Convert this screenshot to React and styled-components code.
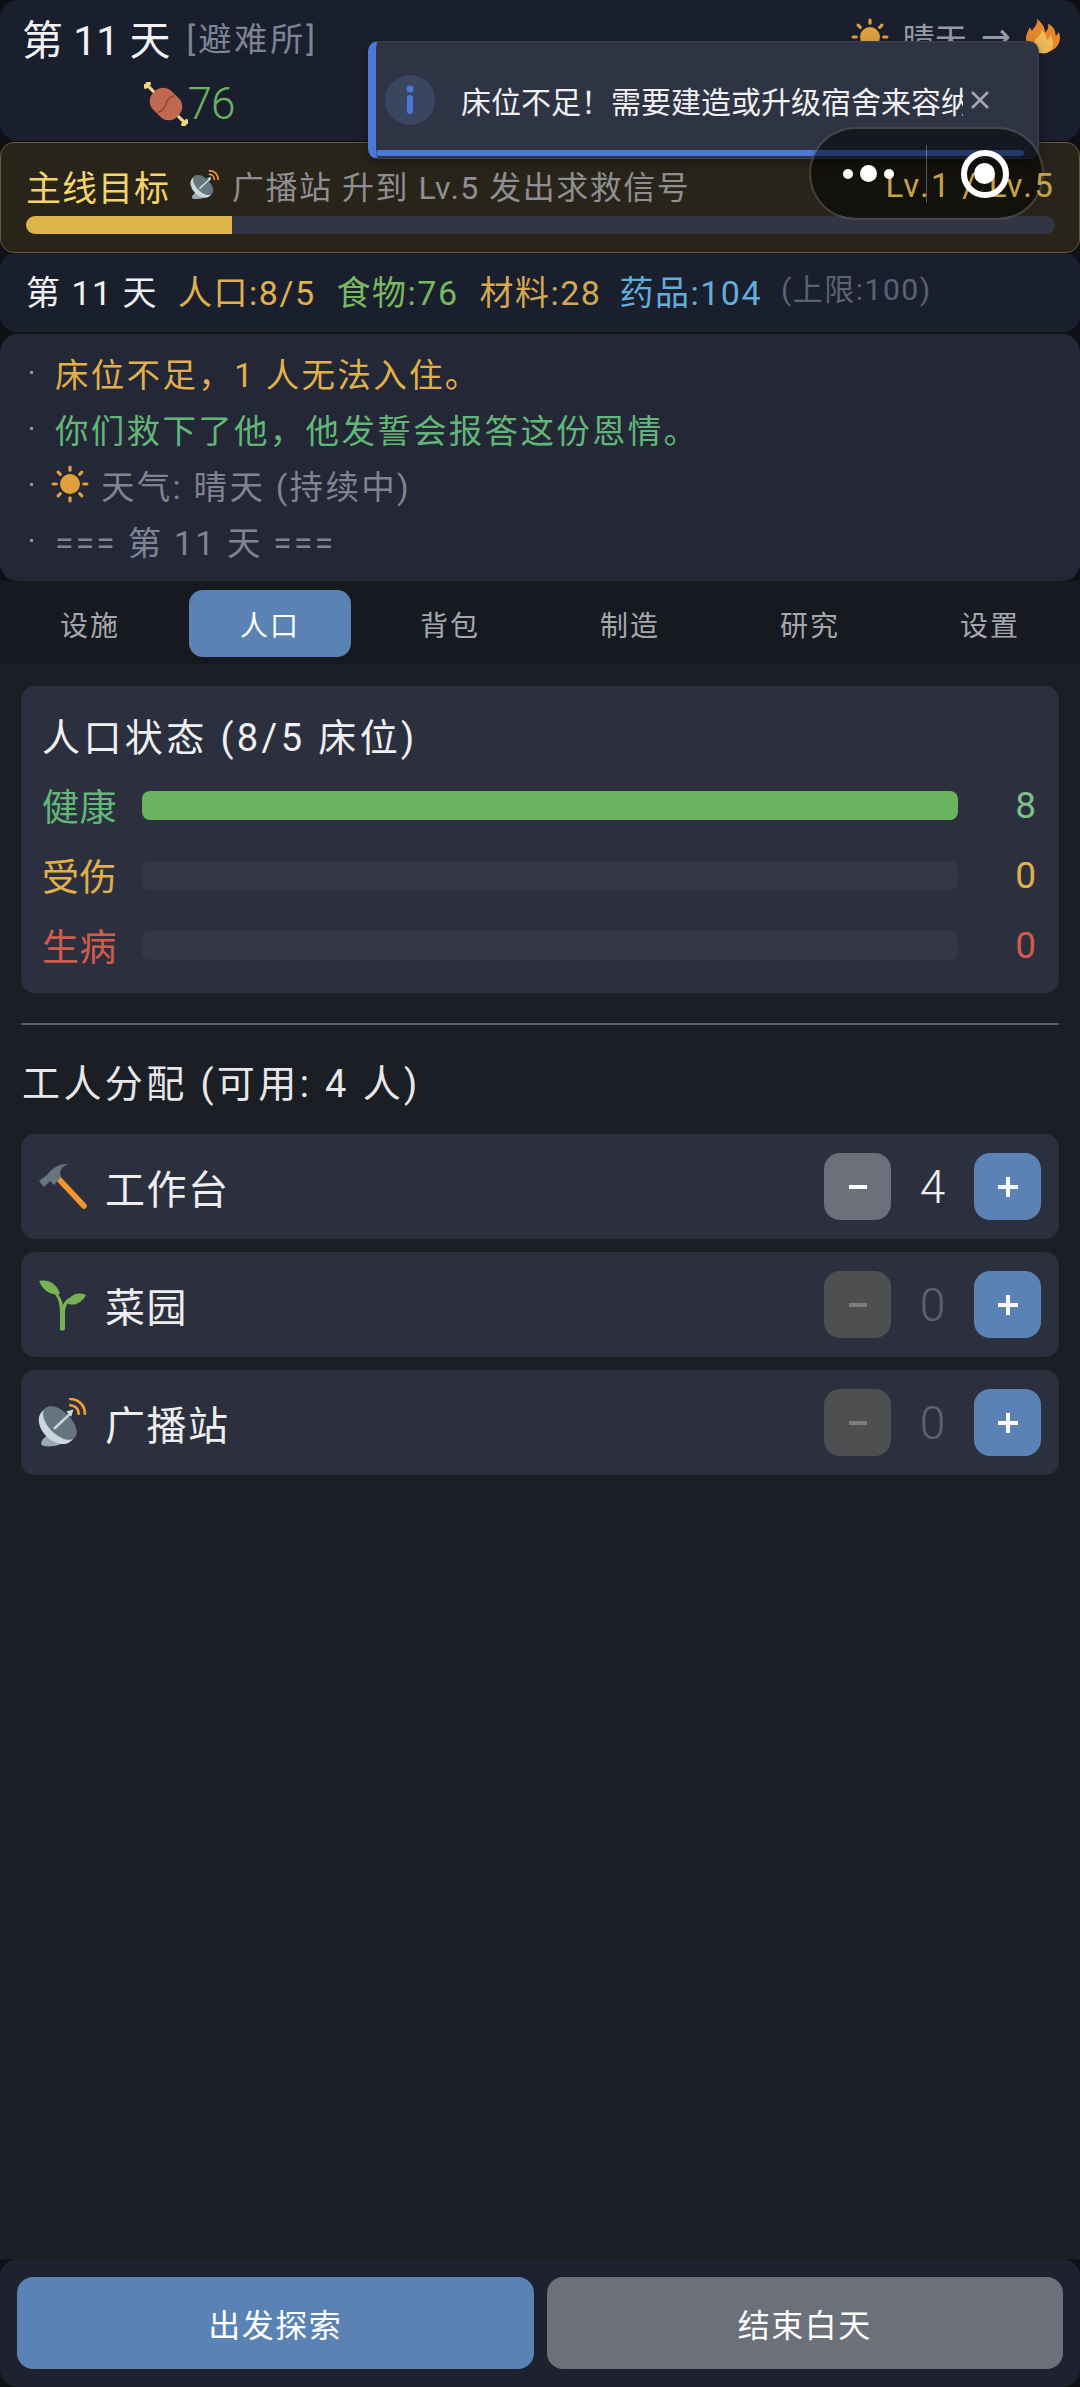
import React from 'react';
import styled, { createGlobalStyle } from 'styled-components';

const GlobalStyle = createGlobalStyle`
  html, body { margin: 0; padding: 0; background: #0f1014; }
  * { box-sizing: border-box; }
  body { font-family: Roboto, "Noto Sans CJK SC", sans-serif; color: #e8e8ea; }
`;

const colors = {
  blue: '#5a82b4',
  green: '#6ab35f',
  logGreen: '#62b677',
  amber: '#e0b04c',
  red: '#cf5c4c',
  sky: '#62aedb',
  muted: '#7f8494',
};

const Page = styled.div`
  position: relative;
  width: 1080px;
  height: 2387px;
  overflow: hidden;
  display: flex;
  flex-direction: column;
  background: #0f1014;
`;

const Header = styled.header`
  height: 141px;
  margin-bottom: 1px;
  padding: 10px 19px 0 22px;
  background: #1a1f2e;
  border-radius: 18px;
`;

const HeaderTop = styled.div`
  display: flex;
  align-items: center;
  justify-content: space-between;
  height: 54px;
`;

const TitleGroup = styled.div`
  display: flex;
  align-items: center;
  gap: 16px;
`;

const DayTitle = styled.h1`
  margin: 0;
  font-size: 41px;
  font-weight: 400;
  color: #f2f2f4;
`;

const Place = styled.span`
  font-size: 33px;
  letter-spacing: 3px;
  color: #7f8494;
`;

const Weather = styled.div`
  display: flex;
  align-items: center;
  gap: 14px;
  font-size: 32px;
  color: #9a9ca6;
`;

const Arrow = styled.span`
  font-family: "DejaVu Sans", sans-serif;
  font-size: 36px;
  line-height: 1;
`;

const FoodWrap = styled.div`
  display: flex;
  justify-content: center;
  align-items: center;
  width: 334px;
  height: 50px;
  margin-top: 15px;
  font-size: 44px;
  font-weight: 300;
  letter-spacing: -1px;
  color: ${colors.green};
`;

const Goal = styled.section`
  height: 111px;
  padding: 19px 24px 0 25px;
  background: #29241a;
  border: 1px solid #6a5a35;
  border-radius: 14px;
`;

const GoalTop = styled.div`
  display: flex;
  align-items: center;
  height: 46px;
`;

const GoalTitle = styled.span`
  font-size: 35px;
  letter-spacing: 1px;
  color: #f3d46c;
  margin-right: 20px;
`;

const GoalText = styled.span`
  flex: 1;
  margin-left: 12px;
  font-size: 32px;
  letter-spacing: 1.500px;
  color: #8e8f92;
`;

/* reads through the wechat capsule in the reference */
const GoalLevel = styled.span`
  position: relative;
  z-index: 2;
  font-size: 33px;
  letter-spacing: 2.300px;
  color: #c4a347;
`;

const Track = styled.div`
  height: ${p => p.$h}px;
  margin-top: ${p => p.$mt || 0}px;
  flex: ${p => p.$flex || 'none'};
  background: ${p => p.$bg};
  border-radius: ${p => p.$r}px;
  overflow: hidden;
`;

const Fill = styled.div`
  height: 100%;
  background: ${p => p.$bg};
`;

const Stats = styled.section`
  height: 79px;
  display: flex;
  align-items: center;
  padding: 0 0 4px 26px;
  background: #1a1f2e;
  border-radius: 16px;
  font-size: 34px;
  letter-spacing: 1.500px;
`;

const Stat = styled.span`
  color: ${p => p.$color};
  margin-right: ${p => p.$gap}px;
  ${p => p.$small && 'font-size: 30px; transform: translateY(-4px);'}
`;

const Log = styled.section`
  height: 247px;
  margin-top: 2px;
  padding: 10px 0 0 30px;
  background: #232736;
  border-radius: 18px;
`;

const LogLine = styled.div`
  display: flex;
  align-items: center;
  height: 56px;
  font-size: 33.5px;
  letter-spacing: 2.300px;
  color: ${p => p.$color};
  &::before {
    content: '';
    width: 3px;
    height: 3px;
    margin-right: 22px;
    background: #8e93a3;
  }
`;

const LogIcon = styled.span`
  display: flex;
  margin: 0 12px 0 -4px;
`;

const Tabs = styled.nav`
  display: grid;
  grid-template-columns: repeat(6, 1fr);
  height: 83px;
  padding: 9px 0 7px;
  background: #171920;
`;

const Tab = styled.div`
  display: flex;
  align-items: center;
  justify-content: center;
  margin: 0 9px;
  font-size: 28px;
  letter-spacing: 2px;
  border-radius: 14px;
  color: ${p => (p.$active ? '#fff' : '#a6a7ac')};
  background: ${p => (p.$active ? colors.blue : 'transparent')};
`;

const Content = styled.main`
  flex: 1;
  padding: 22px 21px 0 21px;
  background: #1c1e26;
`;

const Panel = styled.section`
  height: 307px;
  padding: 27px 23px 0 21px;
  background: #2c303e;
  border-radius: 14px;
`;

const PanelTitle = styled.h2`
  margin: 0 0 7px;
  height: 50px;
  line-height: 50px;
  font-size: 38px;
  font-weight: 400;
  letter-spacing: 3.400px;
  color: #f0f0f2;
`;

const HealthRow = styled.div`
  display: flex;
  align-items: center;
  height: 70px;
  font-size: 37px;
  color: ${p => p.$color};
`;

const HealthLabel = styled.span`
  width: 100px;
  letter-spacing: 0.500px;
`;

const HealthValue = styled.span`
  width: 78px;
  text-align: right;
`;

const Divider = styled.hr`
  height: 2px;
  margin: 30px 0 0;
  border: 0;
  background: #5a5d68;
`;

const WorkersTitle = styled.h2`
  margin: 34px 0 25px 1px;
  height: 50px;
  line-height: 50px;
  font-size: 38px;
  font-weight: 400;
  letter-spacing: 3.400px;
  color: #e8e8ea;
`;

const WorkerList = styled.div`
  display: flex;
  flex-direction: column;
  gap: 13px;
`;

const WorkerRow = styled.div`
  display: flex;
  align-items: center;
  height: 105px;
  padding: 0 18px 0 17px;
  background: #2c303e;
  border-radius: 14px;
`;

const WorkerName = styled.span`
  flex: 1;
  margin-left: 17px;
  font-size: 40px;
  letter-spacing: 1.500px;
  color: #eeeef0;
`;

const StepButton = styled.button`
  width: 67px;
  height: 67px;
  padding: 0;
  border: 0;
  border-radius: 16px;
  display: flex;
  align-items: center;
  justify-content: center;
  background: ${p => p.$bg};
  color: ${p => p.$fg};
`;

const Count = styled.span`
  width: 83px;
  text-align: center;
  font-size: 46px;
  font-weight: 300;
  color: ${p => (p.$dim ? '#5d6170' : '#f0f0f2')};
`;

const Footer = styled.footer`
  height: 128px;
  display: flex;
  gap: 13px;
  padding: 18px 17px 18px;
  background: #1e2230;
  border-radius: 18px;
`;

const FooterButton = styled.button`
  flex: 1;
  border: 0;
  border-radius: 16px;
  font-family: inherit;
  font-size: 32px;
  letter-spacing: 1.500px;
  color: #fff;
  background: ${p => p.$bg};
`;

/* toast and wechat capsule sit over the header */
const Toast = styled.div`
  position: absolute;
  left: 368px;
  top: 41px;
  width: 671px;
  height: 118px;
  display: flex;
  align-items: center;
  padding: 0 0 0 9px;
  background: #2f3444;
  border: 1px solid #3c4152;
  border-left: 8px solid #4a77d8;
  border-radius: 10px;
  box-shadow: 0 4px 12px rgba(0, 0, 0, 0.35);
  overflow: hidden;
  &::after {
    content: '';
    position: absolute;
    left: 0;
    bottom: 2px;
    width: 648px;
    height: 6px;
    border-radius: 3px;
    background: #4a77d8;
  }
`;

const ToastIcon = styled.span`
  flex: none;
  display: flex;
  align-items: center;
  justify-content: center;
  width: 50px;
  height: 50px;
  border-radius: 50%;
  background: #3a4560;
`;

const ToastText = styled.span`
  width: 502px;
  margin-left: 26px;
  overflow: hidden;
  white-space: nowrap;
  font-size: 30px;
  color: #f0f0f2;
`;

const ToastClose = styled.span`
  display: flex;
  margin-left: 7px;
  color: #a5a9b4;
`;

const Capsule = styled.div`
  position: absolute;
  left: 809px;
  top: 127px;
  width: 235px;
  height: 93px;
  display: flex;
  align-items: center;
  background: rgba(0, 0, 0, 0.52);
  border: 2px solid rgba(255, 255, 255, 0.2);
  border-radius: 47px;
`;

const CapsuleSide = styled.div`
  position: relative;
  z-index: 3;
  flex: 1;
  height: 58px;
  display: flex;
  align-items: center;
  justify-content: center;
  gap: ${p => p.$gap || 0}px;
  ${p => p.$line && 'border-right: 1px solid rgba(255,255,255,0.3);'}
`;

const Dot = styled.i`
  width: ${p => p.$d}px;
  height: ${p => p.$d}px;
  border-radius: 50%;
  background: #fff;
`;

const Ring = styled.div`
  width: 48px;
  height: 48px;
  display: flex;
  align-items: center;
  justify-content: center;
  border: 6px solid #fff;
  border-radius: 50%;
`;

const Sun = ({ size }) => (
  <svg width={size} height={size} viewBox="0 0 36 36">
    <circle cx="18" cy="18" r="9.5" fill="#e0a040" />
    <g stroke="#e0a040" strokeWidth="3" strokeLinecap="round">
      <path d="M18 2v3M18 31v3M2 18h3M31 18h3M6.7 6.7l2.1 2.1M27.2 27.2l2.1 2.1M6.7 29.3l2.1-2.1M27.2 8.8l2.1-2.1" />
    </g>
  </svg>
);

const Fire = () => (
  <svg width="36" height="36" viewBox="0 0 36 36">
    <path fill="#e5872a" d="M35 19c0-2-.6-4.5-1.5-6-.5 2-1.700 3.500-3 3.500C31 11 27 6 23 5c1 4-1 7-3 8.500 0-5-3-10-8-13.500 1 6-3 8-5 12-.5-1.500-1.500-2.500-3-3.500.5 2.500-3 6-3 11 0 8.500 7.500 14.500 16.500 14.500S35 27.500 35 19z" />
    <path fill="#eeba58" d="M28 24c0-3-1-6-3-8 0 3-2 5-3.500 5 .5-4-2-8-5-10 .5 4-3 6-5.500 9-1 1.500-2 3-2 5 0 5 4 9.500 9.500 9.500S28 30 28 24z" />
  </svg>
);

const Meat = () => (
  <svg width="44" height="44" viewBox="0 0 44 44">
    <g transform="rotate(45 22 22)">
      <rect x="-4" y="20.500" width="52" height="3" fill="#f5d77e" />
      <circle cx="-5" cy="20" r="2.500" fill="#f5d77e" />
      <circle cx="-5" cy="24" r="2.500" fill="#f5d77e" />
      <circle cx="49" cy="20" r="2.500" fill="#f5d77e" />
      <circle cx="49" cy="24" r="2.500" fill="#f5d77e" />
      <rect x="5" y="9" width="34" height="26" rx="12" fill="#c1694f" />
      <path d="M22 10c-2 4-2 9 0 12s2 8 0 12" stroke="#8f4530" strokeWidth="1.500" fill="none" />
    </g>
  </svg>
);

const Dish = ({ size }) => (
  <svg width={size} height={size} viewBox="0 0 48 48">
    <path fill="#99aab5" d="M3 44c0-5 6-9 12-9 6 0 10 3 9 7-2 5-21 6-21 2z" />
    <ellipse cx="18" cy="27" rx="20" ry="14" transform="rotate(45 18 27)" fill="#ccd6dd" />
    <ellipse cx="21" cy="24" rx="20" ry="11" transform="rotate(45 21 24)" fill="#66757f" />
    <path stroke="#ccd6dd" strokeWidth="2.500" strokeLinecap="round" d="M16 29l14-13" />
    <path fill="#ccd6dd" d="M27 13l7-2-2 7z" />
    <g fill="none" stroke="#f0a033" strokeWidth="2.500" strokeLinecap="round">
      <path d="M31 1c8 0 14 6 14 14" />
      <path d="M31 7c4 0 8 3 8 8" />
    </g>
  </svg>
);

const Hammer = () => (
  <svg width="50" height="50" viewBox="0 0 50 50">
    <path stroke="#f0962c" strokeWidth="5.500" strokeLinecap="round" d="M46 44L18 14" />
    <path fill="#66757f" d="M1 19l8-6c4-6 12-12 21-11-7 3-9 7-7 13l-7 8-4-4-6 6z" />
  </svg>
);

const Seedling = () => (
  <svg width="50" height="52" viewBox="0 0 50 52">
    <path fill="#77b255" d="M22 50V34c0-7-1-14-6-20l2-1c4 4 6 8 7 13 1-3 3-5 6-7l2 2c-4 3-6 7-6 13v16c0 2-5 2-5 0z" />
    <path fill="#77b255" d="M1 2c8-2 18 2 21 13-8 2-17-3-21-13z" />
    <path fill="#77b255" d="M48 16c-6-3-16-2-19 8 6 4 15 0 19-8z" />
  </svg>
);

const MinusIcon = () => (
  <svg width="20" height="6" viewBox="0 0 20 6"><rect y="1" width="18" height="4" x="1" fill="currentColor" /></svg>
);

const PlusIcon = () => (
  <svg width="24" height="24" viewBox="0 0 24 24"><path d="M12 2v20M2 12h20" stroke="currentColor" strokeWidth="4" /></svg>
);

const InfoGlyph = () => (
  <svg width="10" height="30" viewBox="0 0 10 30" fill="#4a77d8">
    <circle cx="5" cy="4" r="3.500" />
    <rect x="2" y="10" width="6" height="19" rx="3" />
  </svg>
);

const CloseGlyph = () => (
  <svg width="20" height="20" viewBox="0 0 20 20"><path d="M2 2l16 16M18 2L2 18" stroke="currentColor" strokeWidth="2.500" /></svg>
);

const tabs = ['设施', '人口', '背包', '制造', '研究', '设置'];

const health = [
  { label: '健康', value: 8, color: colors.logGreen, valueColor: '#7fbf85', width: 100 },
  { label: '受伤', value: 0, color: colors.amber, valueColor: colors.amber, width: 0 },
  { label: '生病', value: 0, color: colors.red, valueColor: colors.red, width: 0 },
];

const workers = [
  { name: '工作台', count: 4, icon: <Hammer /> },
  { name: '菜园', count: 0, icon: <Seedling /> },
  { name: '广播站', count: 0, icon: <Dish size={50} /> },
];

const App = () => (
  <Page>
    <GlobalStyle />
    <Header>
      <HeaderTop>
        <TitleGroup>
          <DayTitle>第 11 天</DayTitle>
          <Place>[避难所]</Place>
        </TitleGroup>
        <Weather>
          <Sun size={38} />
          <span>晴天</span>
          <Arrow>→</Arrow>
          <Fire />
        </Weather>
      </HeaderTop>
      <FoodWrap><Meat />76</FoodWrap>
    </Header>

    <Goal>
      <GoalTop>
        <GoalTitle>主线目标</GoalTitle>
        <Dish size={30} />
        <GoalText>广播站 升到 Lv.5 发出求救信号</GoalText>
        <GoalLevel>Lv.1 / Lv.5</GoalLevel>
      </GoalTop>
      <Track $h={18} $mt={8} $r={9} $bg="#343544">
        <Fill $bg="#dcb44a" style={{ width: '20%' }} />
      </Track>
    </Goal>

    <Stats>
      <Stat $color="#f0f0f2" $gap={20}>第 11 天</Stat>
      <Stat $color={colors.amber} $gap={21}>人口:8/5</Stat>
      <Stat $color="#78b861" $gap={21}>食物:76</Stat>
      <Stat $color="#d2a850" $gap={18}>材料:28</Stat>
      <Stat $color={colors.sky} $gap={19}>药品:104</Stat>
      <Stat $color="#5d6272" $small>(上限:100)</Stat>
    </Stats>

    <Log>
      <LogLine $color={colors.amber}>床位不足，1 人无法入住。</LogLine>
      <LogLine $color={colors.logGreen}>你们救下了他，他发誓会报答这份恩情。</LogLine>
      <LogLine $color={colors.muted}>
        <LogIcon><Sun size={38} /></LogIcon>
        天气: 晴天 (持续中)
      </LogLine>
      <LogLine $color={colors.muted}>=== 第 11 天 ===</LogLine>
    </Log>

    <Tabs>
      {tabs.map(tab => <Tab key={tab} $active={tab === '人口'}>{tab}</Tab>)}
    </Tabs>

    <Content>
      <Panel>
        <PanelTitle>人口状态 (8/5 床位)</PanelTitle>
        {health.map(row => (
          <HealthRow key={row.label} $color={row.color}>
            <HealthLabel>{row.label}</HealthLabel>
            <Track $h={29} $r={8} $flex="1" $bg="#343845">
              <Fill $bg={colors.green} style={{ width: `${row.width}%` }} />
            </Track>
            <HealthValue style={{ color: row.valueColor }}>{row.value}</HealthValue>
          </HealthRow>
        ))}
      </Panel>

      <Divider />
      <WorkersTitle>工人分配 (可用: 4 人)</WorkersTitle>

      <WorkerList>
        {workers.map(worker => (
          <WorkerRow key={worker.name}>
            {worker.icon}
            <WorkerName>{worker.name}</WorkerName>
            <StepButton
              $bg={worker.count ? '#6b707b' : '#4e4f50'}
              $fg={worker.count ? '#fff' : '#7d7d7d'}
            >
              <MinusIcon />
            </StepButton>
            <Count $dim={!worker.count}>{worker.count}</Count>
            <StepButton $bg={colors.blue} $fg="#fff"><PlusIcon /></StepButton>
          </WorkerRow>
        ))}
      </WorkerList>
    </Content>

    <Footer>
      <FooterButton $bg={colors.blue}>出发探索</FooterButton>
      <FooterButton $bg="#6b7079">结束白天</FooterButton>
    </Footer>

    <Toast>
      <ToastIcon><InfoGlyph /></ToastIcon>
      <ToastText>床位不足！需要建造或升级宿舍来容纳更多人</ToastText>
      <ToastClose><CloseGlyph /></ToastClose>
    </Toast>

    <Capsule>
      <CapsuleSide $line $gap={7}>
        <Dot $d={10} /><Dot $d={17} /><Dot $d={10} />
      </CapsuleSide>
      <CapsuleSide>
        <Ring><Dot $d={21} /></Ring>
      </CapsuleSide>
    </Capsule>
  </Page>
);

export default App;
